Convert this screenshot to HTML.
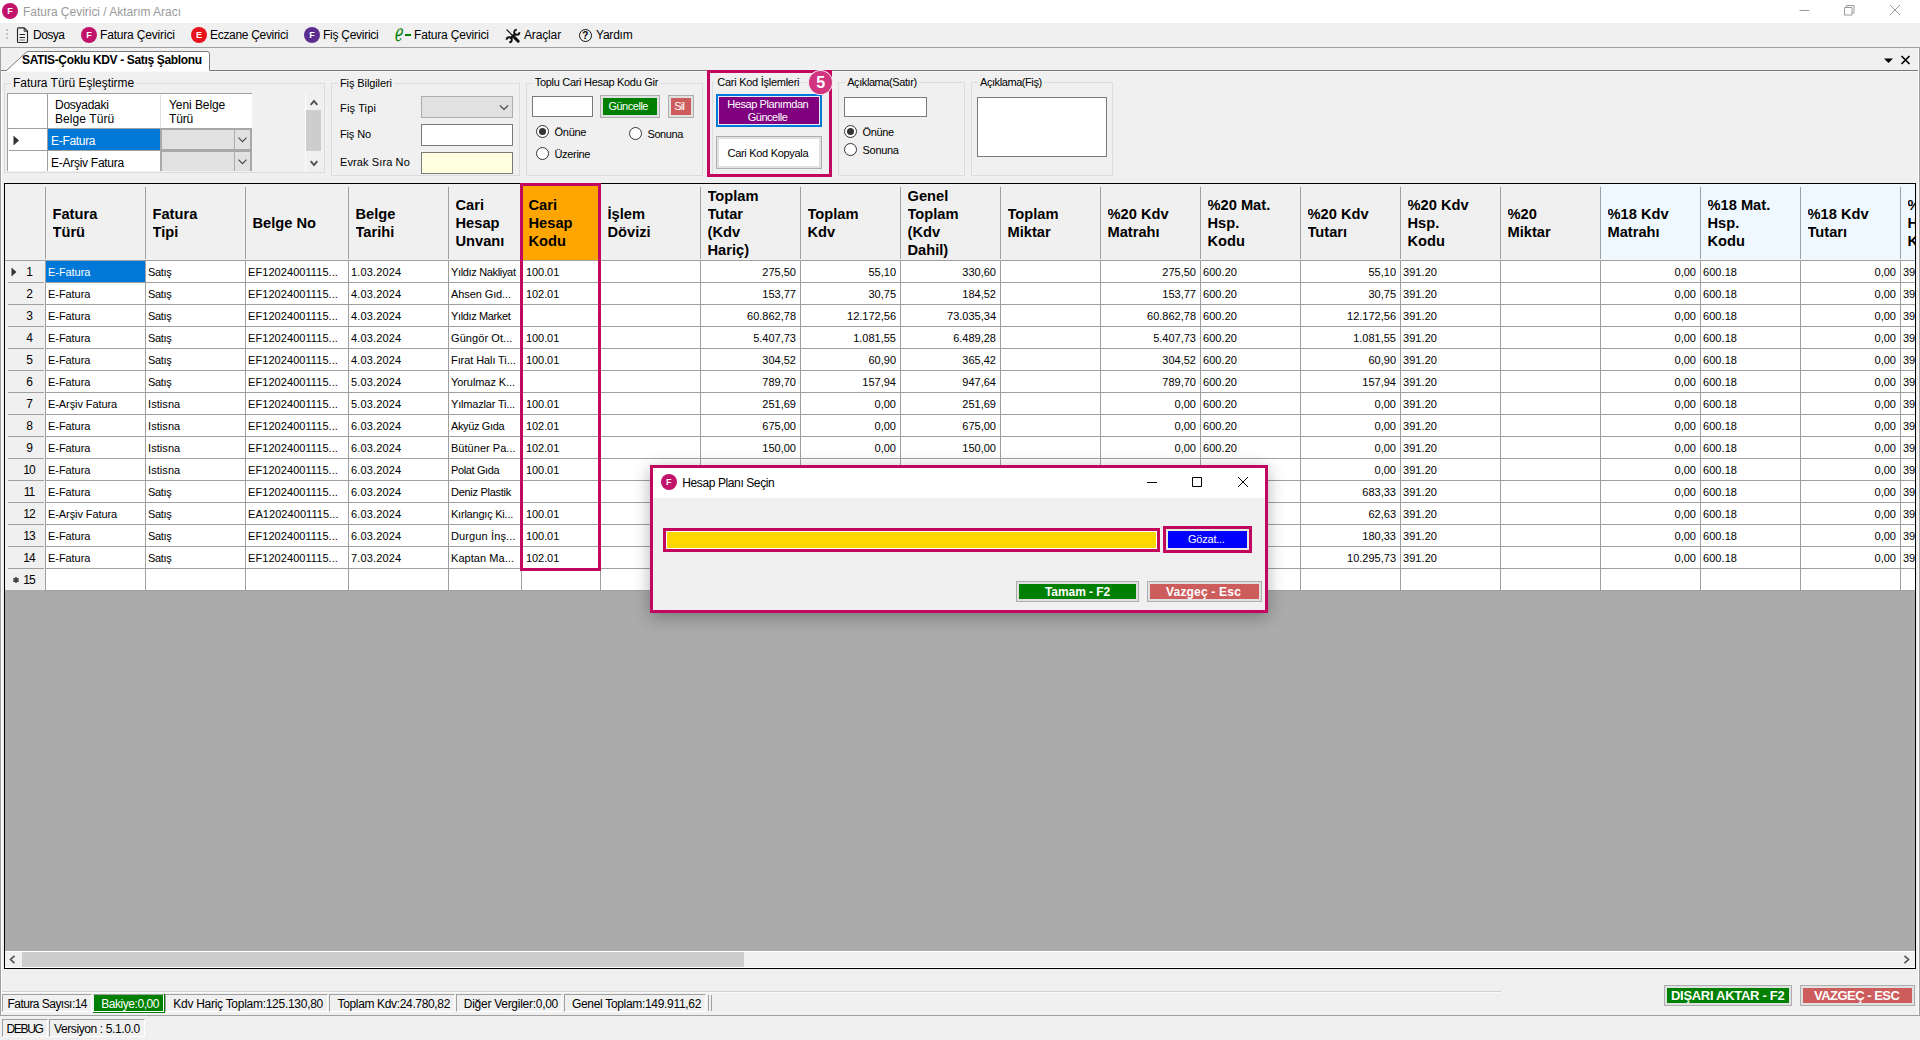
<!DOCTYPE html><html lang="tr"><head><meta charset="utf-8"><title>Fatura Çevirici / Aktarım Aracı</title><style>
html,body{margin:0;padding:0}
body{width:1920px;height:1040px;overflow:hidden;position:relative;background:#f0f0f0;font-family:"Liberation Sans",sans-serif;font-size:11px;color:#000}
div{position:absolute;box-sizing:border-box}
svg{position:absolute;overflow:visible}
.t{white-space:nowrap}
.m{white-space:nowrap;font-size:12px}
.g{white-space:nowrap;font-size:12px}
.h{font-weight:bold;font-size:14.67px;line-height:18px;white-space:nowrap}
.c{white-space:nowrap;font-size:11px;height:21px;line-height:22.5px;overflow:hidden}
.r{text-align:right}
.btn{border:1px solid #adadad;background:#e1e1e1}
.gb{border:1px solid #dcdcdc}
.rad{width:13px;height:13px;border:1px solid #333;border-radius:50%;background:#fff}
.rad.on:after{content:"";position:absolute;left:2px;top:2px;width:7px;height:7px;border-radius:50%;background:#333}
</style></head><body>
<div style="left:0px;top:0px;width:1920px;height:23px;background:#fff"></div>
<div style="left:2px;top:3px;width:16px;height:16px;border-radius:50%;background:#c2136b;color:#fff;font-weight:bold;font-size:9px;line-height:16px;text-align:center">F</div>
<div class="t" style="left:23px;top:3px;height:19px;line-height:19px;font-size:12px;letter-spacing:-0.023px;color:#9a9a9a">Fatura Çevirici / Aktarım Aracı</div>
<svg style="left:1790px;top:0" width="130" height="23" viewBox="0 0 130 23"><g stroke="#9a9a9a" stroke-width="1" fill="none"><path d="M9.5 10.5h10"/><path d="M54.5 7.5h7.5v7.5h-7.5z M56.5 7.5v-2h7.5v7.5h-2"/><path d="M100 5l10 10M110 5l-10 10"/></g></svg>
<div style="left:6px;top:29px;width:2px;height:2px;background:#c3c3c3"></div>
<div style="left:6px;top:33px;width:2px;height:2px;background:#c3c3c3"></div>
<div style="left:6px;top:37px;width:2px;height:2px;background:#c3c3c3"></div>
<svg style="left:16px;top:27px" width="13" height="17" viewBox="0 0 13 17"><path d="M2.6 0.9h5.6l3.3 3.3v10.3q0 1-1 1h-8q-1 0-1-1v-12.6q0-1 1-1z" fill="none" stroke="#222" stroke-width="1.1" stroke-linejoin="round"/><path d="M8.2 0.9v3.3h3.3" fill="none" stroke="#222" stroke-width="1"/><path d="M3.5 7.5h5.5M3.5 10.5h5.5" stroke="#222" stroke-width="1"/><path d="M3.5 13h5.5" stroke="#777" stroke-width="1"/></svg>
<div class="m" style="left:33px;top:25px;height:20px;line-height:20px;font-size:12px;letter-spacing:-0.503px;">Dosya</div>
<div style="left:81px;top:27px;width:16px;height:16px;border-radius:50%;background:#c2136b;color:#fff;font-weight:bold;font-size:9px;line-height:16px;text-align:center">F</div>
<div class="m" style="left:100px;top:25px;height:20px;line-height:20px;font-size:12px;letter-spacing:-0.177px;">Fatura Çevirici</div>
<div style="left:191px;top:27px;width:16px;height:16px;border-radius:50%;background:#e8121d;color:#fff;font-weight:bold;font-size:9px;line-height:16px;text-align:center">E</div>
<div class="m" style="left:210px;top:25px;height:20px;line-height:20px;font-size:12px;letter-spacing:-0.313px;">Eczane Çevirici</div>
<div style="left:304px;top:27px;width:16px;height:16px;border-radius:50%;background:#5b2d8e;color:#fff;font-weight:bold;font-size:9px;line-height:16px;text-align:center">F</div>
<div class="m" style="left:323px;top:25px;height:20px;line-height:20px;font-size:12px;letter-spacing:-0.264px;">Fiş Çevirici</div>
<div class="t" style="left:394.5px;top:22.5px;height:22px;line-height:22px;font-family:'DejaVu Sans',sans-serif;font-size:14px;color:#008000;transform:scale(1.0,1.72) skewX(-8deg);transform-origin:0 60%">ℯ</div>
<div style="left:405px;top:34px;width:6px;height:2px;background:#008000"></div>
<div class="m" style="left:414px;top:25px;height:20px;line-height:20px;font-size:12px;letter-spacing:-0.177px;">Fatura Çevirici</div>
<svg style="left:505.5px;top:28.5px" width="14" height="14" viewBox="0 0 14 14"><g fill="none" stroke="#111" stroke-linecap="round"><path d="M1 1L7.5 7.5" stroke-width="1.2"/><path d="M8.6 8.6L12.2 12.2" stroke-width="3"/><path d="M4.6 9.4L9.4 4.6" stroke-width="2.4" stroke-linecap="butt"/><path d="M13.4 3.2A2.6 2.6 0 1 1 10.8 0.6" stroke-width="1.9" stroke-linecap="butt"/><path d="M0.6 10.8A2.6 2.6 0 1 1 3.2 13.4" stroke-width="1.9" stroke-linecap="butt"/></g></svg>
<div class="m" style="left:524px;top:25px;height:20px;line-height:20px;font-size:12px;letter-spacing:-0.145px;">Araçlar</div>
<div style="left:578.5px;top:28.5px;width:13.5px;height:13.5px;border:1.3px solid #111;border-radius:50%;font-size:10px;line-height:11.5px;text-align:center;font-weight:bold">?</div>
<div class="m" style="left:596px;top:25px;height:20px;line-height:20px;font-size:12px;letter-spacing:-0.215px;">Yardım</div>
<div style="left:0px;top:47px;width:1920px;height:1px;background:#a0a0a0"></div>
<div style="left:0px;top:70px;width:1920px;height:1px;background:#7a7a7a"></div>
<div style="left:1px;top:71px;width:1918px;height:1px;background:#f8f8f8"></div>
<div style="left:1918px;top:48px;width:1px;height:967px;background:#fff"></div>
<div style="left:0px;top:48px;width:1px;height:968px;background:#a0a0a0"></div>
<div style="left:1px;top:71px;width:1px;height:944px;background:#fff"></div>
<div style="left:1919px;top:48px;width:1px;height:968px;background:#a0a0a0"></div>
<div style="left:0px;top:1015px;width:1920px;height:1px;background:#a0a0a0"></div>
<svg style="left:0;top:48px" width="230" height="24" viewBox="0 0 230 24"><path d="M6.5 22.5L26 4.5Q27 3.5 29 3.5H207Q209.5 3.5 209.5 6V22.5" fill="#fff" stroke="#7a7a7a" stroke-width="1"/><path d="M7 22.5H209" stroke="#fff" stroke-width="1.2"/></svg>
<div class="t" style="left:22px;top:50.8px;height:18px;line-height:18px;font-size:12px;letter-spacing:-0.350px;font-weight:bold">SATIS-Çoklu KDV - Satış Şablonu</div>
<svg style="left:1884px;top:55px" width="28" height="10" viewBox="0 0 28 10"><path d="M0 3.5h9l-4.5 4.5z" fill="#000"/><path d="M17.5 1l8 8M25.5 1l-8 8" stroke="#000" stroke-width="1.6"/></svg>
<div class="gb" style="left:4px;top:83px;width:321px;height:90px;"></div>
<div class="g" style="left:11px;top:75px;height:16px;line-height:16px;background:#f0f0f0;padding:0 2px;font-size:12px;letter-spacing:-0.028px;">Fatura Türü Eşleştirme</div>
<div style="left:7px;top:93px;width:245px;height:78px;background:#fff;border-top:1px solid #a0a0a0;border-left:1px solid #a0a0a0"></div>
<div style="left:47px;top:94px;width:1px;height:77px;background:#a0a0a0"></div>
<div style="left:160px;top:95px;width:1px;height:33px;background:#e0e0e0"></div>
<div style="left:8px;top:128px;width:244px;height:1px;background:#a0a0a0"></div>
<div style="left:9px;top:150px;width:151px;height:1px;background:#a0a0a0"></div>
<div class="g" style="left:55px;top:98px;height:14px;line-height:14px;font-size:12px;letter-spacing:-0.270px;">Dosyadaki</div>
<div class="g" style="left:55px;top:112px;height:14px;line-height:14px;font-size:12px;letter-spacing:0.081px;">Belge Türü</div>
<div class="g" style="left:169px;top:98px;height:14px;line-height:14px;font-size:12px;letter-spacing:-0.074px;">Yeni Belge</div>
<div class="g" style="left:169px;top:112px;height:14px;line-height:14px;font-size:12px;letter-spacing:-0.169px;">Türü</div>
<div style="left:48px;top:129px;width:112px;height:21px;background:#0078d7"></div>
<div class="g" style="left:51px;top:131px;height:21px;line-height:21px;font-size:12px;letter-spacing:-0.310px;color:#fff">E-Fatura</div>
<div class="g" style="left:51px;top:153px;height:21px;line-height:21px;font-size:12px;letter-spacing:-0.270px;">E-Arşiv Fatura</div>
<svg style="left:13px;top:135px" width="7" height="11" viewBox="0 0 7 11"><path d="M0.5 0.5v10l5.5-5z" fill="#333"/></svg>
<div style="left:160px;top:128px;width:92px;height:43px;background:#a8a8a8"></div>
<div style="left:162px;top:130px;width:88px;height:19px;background:#e1e1e1"></div>
<div style="left:234px;top:130px;width:1px;height:19px;background:#adadad"></div>
<svg style="left:237.5px;top:137px" width="9" height="6" viewBox="0 0 9 6"><path d="M0.5 0.6l4 4 4-4" fill="none" stroke="#444" stroke-width="1.1"/></svg>
<div style="left:162px;top:152px;width:88px;height:19px;background:#e1e1e1"></div>
<div style="left:234px;top:152px;width:1px;height:19px;background:#adadad"></div>
<svg style="left:237.5px;top:159px" width="9" height="6" viewBox="0 0 9 6"><path d="M0.5 0.6l4 4 4-4" fill="none" stroke="#444" stroke-width="1.1"/></svg>
<div style="left:5px;top:171px;width:319px;height:1px;background:#f0f0f0"></div>
<div style="left:305px;top:93px;width:17px;height:79px;background:#f0f0f0;border-left:1px solid #fbfbfb"></div>
<div style="left:306px;top:110px;width:15px;height:41px;background:#cdcdcd"></div>
<svg style="left:309.5px;top:98.5px" width="8" height="7" viewBox="0 0 8 7"><path d="M0.7 5.8l3.3-3.8 3.3 3.8" fill="none" stroke="#505050" stroke-width="1.9"/></svg>
<svg style="left:309.5px;top:159.5px" width="8" height="7" viewBox="0 0 8 7"><path d="M0.7 1.2l3.3 3.8 3.3-3.8" fill="none" stroke="#505050" stroke-width="1.9"/></svg>
<div class="gb" style="left:331px;top:83px;width:189px;height:93px;"></div>
<div class="g" style="left:338px;top:74.5px;height:16px;line-height:16px;background:#f0f0f0;padding:0 2px;font-size:11px;letter-spacing:-0.098px;">Fiş Bilgileri</div>
<div class="t" style="left:340px;top:99.5px;height:16px;line-height:16px;font-size:11px;letter-spacing:0.158px;">Fiş Tipi</div>
<div class="t" style="left:340px;top:126px;height:16px;line-height:16px;font-size:11px;letter-spacing:-0.147px;">Fiş No</div>
<div class="t" style="left:340px;top:154px;height:16px;line-height:16px;font-size:11px;letter-spacing:0.110px;">Evrak Sıra No</div>
<div style="left:421px;top:96px;width:92px;height:22px;background:#e1e1e1;border:1px solid #adadad"></div>
<svg style="left:499px;top:105px" width="10" height="6" viewBox="0 0 10 6"><path d="M1 0.5l4 4 4-4" fill="none" stroke="#444" stroke-width="1.1"/></svg>
<div style="left:421px;top:124px;width:92px;height:22px;background:#fff;border:1px solid #7a7a7a"></div>
<div style="left:421px;top:152px;width:92px;height:22px;background:#ffffe0;border:1px solid #7a7a7a"></div>
<div class="gb" style="left:526px;top:83px;width:177px;height:93px;"></div>
<div class="g" style="left:532.8px;top:74px;height:16px;line-height:16px;background:#f0f0f0;padding:0 2px;font-size:11px;letter-spacing:-0.306px;">Toplu Cari Hesap Kodu Gir</div>
<div style="left:532px;top:96px;width:61px;height:21px;background:#fff;border:1px solid #7a7a7a"></div>
<div class="btn" style="left:600px;top:95px;width:60px;height:23px;"></div>
<div style="left:603px;top:98px;width:54px;height:17px;background:#008000"></div>
<div class="t" style="left:608.4px;top:98.3px;height:17px;line-height:17px;font-size:11px;letter-spacing:-0.477px;color:#fff">Güncelle</div>
<div class="btn" style="left:668px;top:95px;width:26px;height:23px;"></div>
<div style="left:671px;top:98px;width:20px;height:17px;background:#cd5c5c"></div>
<div class="t" style="left:674.2px;top:98.3px;height:17px;line-height:17px;font-size:11px;letter-spacing:-0.775px;color:#fff">Sil</div>
<div class="rad on" style="left:536.0px;top:125.0px"></div>
<div class="t" style="left:554.5px;top:124.0px;height:16px;line-height:16px;font-size:11px;letter-spacing:-0.266px;">Önüne</div>
<div class="rad" style="left:629.0px;top:127.0px"></div>
<div class="t" style="left:647.5px;top:126.0px;height:16px;line-height:16px;font-size:11px;letter-spacing:-0.421px;">Sonuna</div>
<div class="rad" style="left:536.0px;top:147.0px"></div>
<div class="t" style="left:554.5px;top:146.0px;height:16px;line-height:16px;font-size:11px;letter-spacing:-0.329px;">Üzerine</div>
<div class="gb" style="left:712px;top:82px;width:119px;height:94px;"></div>
<div class="g" style="left:715.3px;top:74px;height:16px;line-height:16px;background:#f0f0f0;padding:0 2px;font-size:11px;letter-spacing:-0.267px;">Cari Kod İşlemleri</div>
<div style="left:716px;top:94px;width:106px;height:33px;border:2px solid #0078d7;background:#e5f1fb"></div>
<div style="left:719px;top:97px;width:100px;height:27px;background:#800080"></div>
<div class="t" style="left:727.2px;top:98px;height:13px;line-height:13px;font-size:11px;letter-spacing:-0.423px;color:#fff">Hesap Planımdan</div>
<div class="t" style="left:747.7px;top:111px;height:13px;line-height:13px;font-size:11px;letter-spacing:-0.477px;color:#fff">Güncelle</div>
<div class="btn" style="left:716px;top:136px;width:106px;height:33px;"></div>
<div style="left:719px;top:139px;width:100px;height:27px;background:#fff"></div>
<div class="t" style="left:727.5px;top:145px;height:16px;line-height:16px;font-size:11px;letter-spacing:-0.300px;">Cari Kod Kopyala</div>
<div style="left:707px;top:70px;width:125px;height:107px;border:3px solid #c2075f"></div>
<div style="left:808.2px;top:69.8px;width:24.6px;height:24.8px;border-radius:50%;background:#d2357f;border:1px solid #fbe9f1;color:#fff;font-weight:bold;font-size:16px;line-height:23px;text-align:center;padding-left:0.5px">5</div>
<div class="gb" style="left:838px;top:82px;width:127px;height:94px;"></div>
<div class="g" style="left:845.2px;top:74px;height:16px;line-height:16px;background:#f0f0f0;padding:0 2px;font-size:11px;letter-spacing:-0.420px;">Açıklama(Satır)</div>
<div style="left:844px;top:97px;width:83px;height:20px;background:#fff;border:1px solid #7a7a7a"></div>
<div class="rad on" style="left:844.0px;top:125.0px"></div>
<div class="t" style="left:862.5px;top:124.0px;height:16px;line-height:16px;font-size:11px;letter-spacing:-0.346px;">Önüne</div>
<div class="rad" style="left:844.0px;top:143.0px"></div>
<div class="t" style="left:862.5px;top:142.0px;height:16px;line-height:16px;font-size:11px;letter-spacing:-0.288px;">Sonuna</div>
<div class="gb" style="left:971px;top:82px;width:142px;height:94px;"></div>
<div class="g" style="left:978px;top:74px;height:16px;line-height:16px;background:#f0f0f0;padding:0 2px;font-size:11px;letter-spacing:-0.425px;">Açıklama(Fiş)</div>
<div style="left:977px;top:97px;width:130px;height:60px;background:#fff;border:1px solid #7a7a7a"></div>
<div style="left:4px;top:183px;width:1912px;height:786px;border:1px solid #000;background:#ababab"></div>
<div style="left:5px;top:184px;width:1910px;height:76px;background:#f0f0f0"></div>
<div style="left:1601px;top:184px;width:314px;height:76px;background:#f0f8ff"></div>
<div style="left:46px;top:261px;width:1869px;height:329px;background:#fff"></div>
<div style="left:5px;top:261px;width:40px;height:329px;background:#f0f0f0"></div>
<div style="left:522px;top:184px;width:78px;height:76px;background:#ffa500"></div>
<div style="left:45px;top:187px;width:1px;height:72px;background:#a0a0a0"></div>
<div style="left:45px;top:260px;width:1px;height:331px;background:#a0a0a0"></div>
<div style="left:145px;top:187px;width:1px;height:72px;background:#a0a0a0"></div>
<div style="left:145px;top:260px;width:1px;height:331px;background:#a0a0a0"></div>
<div style="left:245px;top:187px;width:1px;height:72px;background:#a0a0a0"></div>
<div style="left:245px;top:260px;width:1px;height:331px;background:#a0a0a0"></div>
<div style="left:348px;top:187px;width:1px;height:72px;background:#a0a0a0"></div>
<div style="left:348px;top:260px;width:1px;height:331px;background:#a0a0a0"></div>
<div style="left:448px;top:187px;width:1px;height:72px;background:#a0a0a0"></div>
<div style="left:448px;top:260px;width:1px;height:331px;background:#a0a0a0"></div>
<div style="left:521px;top:187px;width:1px;height:72px;background:#a0a0a0"></div>
<div style="left:521px;top:260px;width:1px;height:331px;background:#a0a0a0"></div>
<div style="left:600px;top:187px;width:1px;height:72px;background:#a0a0a0"></div>
<div style="left:600px;top:260px;width:1px;height:331px;background:#a0a0a0"></div>
<div style="left:700px;top:187px;width:1px;height:72px;background:#a0a0a0"></div>
<div style="left:700px;top:260px;width:1px;height:331px;background:#a0a0a0"></div>
<div style="left:800px;top:187px;width:1px;height:72px;background:#a0a0a0"></div>
<div style="left:800px;top:260px;width:1px;height:331px;background:#a0a0a0"></div>
<div style="left:900px;top:187px;width:1px;height:72px;background:#a0a0a0"></div>
<div style="left:900px;top:260px;width:1px;height:331px;background:#a0a0a0"></div>
<div style="left:1000px;top:187px;width:1px;height:72px;background:#a0a0a0"></div>
<div style="left:1000px;top:260px;width:1px;height:331px;background:#a0a0a0"></div>
<div style="left:1100px;top:187px;width:1px;height:72px;background:#a0a0a0"></div>
<div style="left:1100px;top:260px;width:1px;height:331px;background:#a0a0a0"></div>
<div style="left:1200px;top:187px;width:1px;height:72px;background:#a0a0a0"></div>
<div style="left:1200px;top:260px;width:1px;height:331px;background:#a0a0a0"></div>
<div style="left:1300px;top:187px;width:1px;height:72px;background:#a0a0a0"></div>
<div style="left:1300px;top:260px;width:1px;height:331px;background:#a0a0a0"></div>
<div style="left:1400px;top:187px;width:1px;height:72px;background:#a0a0a0"></div>
<div style="left:1400px;top:260px;width:1px;height:331px;background:#a0a0a0"></div>
<div style="left:1500px;top:187px;width:1px;height:72px;background:#a0a0a0"></div>
<div style="left:1500px;top:260px;width:1px;height:331px;background:#a0a0a0"></div>
<div style="left:1600px;top:187px;width:1px;height:72px;background:#a0a0a0"></div>
<div style="left:1600px;top:260px;width:1px;height:331px;background:#a0a0a0"></div>
<div style="left:1700px;top:187px;width:1px;height:72px;background:#a0a0a0"></div>
<div style="left:1700px;top:260px;width:1px;height:331px;background:#a0a0a0"></div>
<div style="left:1800px;top:187px;width:1px;height:72px;background:#a0a0a0"></div>
<div style="left:1800px;top:260px;width:1px;height:331px;background:#a0a0a0"></div>
<div style="left:1900px;top:187px;width:1px;height:72px;background:#a0a0a0"></div>
<div style="left:1900px;top:260px;width:1px;height:331px;background:#a0a0a0"></div>
<div style="left:5px;top:260px;width:1910px;height:1px;background:#a0a0a0"></div>
<div style="left:46px;top:282px;width:1869px;height:1px;background:#a0a0a0"></div>
<div style="left:8px;top:282px;width:36px;height:1px;background:#a0a0a0"></div>
<div style="left:46px;top:304px;width:1869px;height:1px;background:#a0a0a0"></div>
<div style="left:8px;top:304px;width:36px;height:1px;background:#a0a0a0"></div>
<div style="left:46px;top:326px;width:1869px;height:1px;background:#a0a0a0"></div>
<div style="left:8px;top:326px;width:36px;height:1px;background:#a0a0a0"></div>
<div style="left:46px;top:348px;width:1869px;height:1px;background:#a0a0a0"></div>
<div style="left:8px;top:348px;width:36px;height:1px;background:#a0a0a0"></div>
<div style="left:46px;top:370px;width:1869px;height:1px;background:#a0a0a0"></div>
<div style="left:8px;top:370px;width:36px;height:1px;background:#a0a0a0"></div>
<div style="left:46px;top:392px;width:1869px;height:1px;background:#a0a0a0"></div>
<div style="left:8px;top:392px;width:36px;height:1px;background:#a0a0a0"></div>
<div style="left:46px;top:414px;width:1869px;height:1px;background:#a0a0a0"></div>
<div style="left:8px;top:414px;width:36px;height:1px;background:#a0a0a0"></div>
<div style="left:46px;top:436px;width:1869px;height:1px;background:#a0a0a0"></div>
<div style="left:8px;top:436px;width:36px;height:1px;background:#a0a0a0"></div>
<div style="left:46px;top:458px;width:1869px;height:1px;background:#a0a0a0"></div>
<div style="left:8px;top:458px;width:36px;height:1px;background:#a0a0a0"></div>
<div style="left:46px;top:480px;width:1869px;height:1px;background:#a0a0a0"></div>
<div style="left:8px;top:480px;width:36px;height:1px;background:#a0a0a0"></div>
<div style="left:46px;top:502px;width:1869px;height:1px;background:#a0a0a0"></div>
<div style="left:8px;top:502px;width:36px;height:1px;background:#a0a0a0"></div>
<div style="left:46px;top:524px;width:1869px;height:1px;background:#a0a0a0"></div>
<div style="left:8px;top:524px;width:36px;height:1px;background:#a0a0a0"></div>
<div style="left:46px;top:546px;width:1869px;height:1px;background:#a0a0a0"></div>
<div style="left:8px;top:546px;width:36px;height:1px;background:#a0a0a0"></div>
<div style="left:46px;top:568px;width:1869px;height:1px;background:#a0a0a0"></div>
<div style="left:8px;top:568px;width:36px;height:1px;background:#a0a0a0"></div>
<div style="left:46px;top:590px;width:1869px;height:1px;background:#a0a0a0"></div>
<div class="h" style="left:52.5px;top:204.7px;width:200px;overflow:hidden;height:36px">Fatura<br>Türü</div>
<div class="h" style="left:152.5px;top:204.7px;width:200px;overflow:hidden;height:36px">Fatura<br>Tipi</div>
<div class="h" style="left:252.5px;top:213.7px;width:200px;overflow:hidden;height:18px">Belge No</div>
<div class="h" style="left:355.5px;top:204.7px;width:200px;overflow:hidden;height:36px">Belge<br>Tarihi</div>
<div class="h" style="left:455.5px;top:195.7px;width:200px;overflow:hidden;height:54px">Cari<br>Hesap<br>Unvanı</div>
<div class="h" style="left:528.5px;top:195.7px;width:200px;overflow:hidden;height:54px">Cari<br>Hesap<br>Kodu</div>
<div class="h" style="left:607.5px;top:204.7px;width:200px;overflow:hidden;height:36px">İşlem<br>Dövizi</div>
<div class="h" style="left:707.5px;top:186.7px;width:200px;overflow:hidden;height:72px">Toplam<br>Tutar<br>(Kdv<br>Hariç)</div>
<div class="h" style="left:807.5px;top:204.7px;width:200px;overflow:hidden;height:36px">Toplam<br>Kdv</div>
<div class="h" style="left:907.5px;top:186.7px;width:200px;overflow:hidden;height:72px">Genel<br>Toplam<br>(Kdv<br>Dahil)</div>
<div class="h" style="left:1007.5px;top:204.7px;width:200px;overflow:hidden;height:36px">Toplam<br>Miktar</div>
<div class="h" style="left:1107.5px;top:204.7px;width:200px;overflow:hidden;height:36px">%20 Kdv<br>Matrahı</div>
<div class="h" style="left:1207.5px;top:195.7px;width:200px;overflow:hidden;height:54px">%20 Mat.<br>Hsp.<br>Kodu</div>
<div class="h" style="left:1307.5px;top:204.7px;width:200px;overflow:hidden;height:36px">%20 Kdv<br>Tutarı</div>
<div class="h" style="left:1407.5px;top:195.7px;width:200px;overflow:hidden;height:54px">%20 Kdv<br>Hsp.<br>Kodu</div>
<div class="h" style="left:1507.5px;top:204.7px;width:200px;overflow:hidden;height:36px">%20<br>Miktar</div>
<div class="h" style="left:1607.5px;top:204.7px;width:200px;overflow:hidden;height:36px">%18 Kdv<br>Matrahı</div>
<div class="h" style="left:1707.5px;top:195.7px;width:200px;overflow:hidden;height:54px">%18 Mat.<br>Hsp.<br>Kodu</div>
<div class="h" style="left:1807.5px;top:204.7px;width:200px;overflow:hidden;height:36px">%18 Kdv<br>Tutarı</div>
<div class="h" style="left:1907.5px;top:195.7px;width:8px;overflow:hidden;height:54px">%<br>H<br>K</div>
<div style="left:46px;top:261px;width:99px;height:21px;background:#0078d7"></div>
<div class="c" style="left:14px;top:261px;width:29px;text-align:center;font-size:12px;letter-spacing:-1px;padding-left:1px">1</div>
<div class="c" style="left:46px;top:261px;width:99px;padding-left:2px;letter-spacing:-0.062px;color:#fff">E-Fatura</div>
<div class="c" style="left:146px;top:261px;width:99px;padding-left:2px;letter-spacing:-0.353px;">Satış</div>
<div class="c" style="left:246px;top:261px;width:102px;padding-left:2px;letter-spacing:0.069px;">EF12024001115...</div>
<div class="c" style="left:349px;top:261px;width:99px;padding-left:2px;letter-spacing:0.151px;">1.03.2024</div>
<div class="c" style="left:449px;top:261px;width:72px;padding-left:2px;letter-spacing:-0.339px;">Yıldız Nakliyat</div>
<div class="c" style="left:522px;top:261px;width:78px;padding-left:4px;letter-spacing:-0.074px;">100.01</div>
<div class="c r" style="left:701px;top:261px;width:99px;padding-right:4px;">275,50</div>
<div class="c r" style="left:801px;top:261px;width:99px;padding-right:4px;">55,10</div>
<div class="c r" style="left:901px;top:261px;width:99px;padding-right:4px;">330,60</div>
<div class="c r" style="left:1101px;top:261px;width:99px;padding-right:4px;">275,50</div>
<div class="c" style="left:1201px;top:261px;width:99px;padding-left:2px;letter-spacing:0.059px;">600.20</div>
<div class="c r" style="left:1301px;top:261px;width:99px;padding-right:4px;">55,10</div>
<div class="c" style="left:1401px;top:261px;width:99px;padding-left:2px;letter-spacing:0.059px;">391.20</div>
<div class="c r" style="left:1601px;top:261px;width:99px;padding-right:4px;">0,00</div>
<div class="c" style="left:1701px;top:261px;width:99px;padding-left:2px;letter-spacing:0.059px;">600.18</div>
<div class="c r" style="left:1801px;top:261px;width:99px;padding-right:4px;">0,00</div>
<div class="c" style="left:1901px;top:261px;width:14px;padding-left:2px">39</div>
<div class="c" style="left:14px;top:283px;width:29px;text-align:center;font-size:12px;letter-spacing:-1px;padding-left:1px">2</div>
<div class="c" style="left:46px;top:283px;width:99px;padding-left:2px;letter-spacing:-0.062px;">E-Fatura</div>
<div class="c" style="left:146px;top:283px;width:99px;padding-left:2px;letter-spacing:-0.353px;">Satış</div>
<div class="c" style="left:246px;top:283px;width:102px;padding-left:2px;letter-spacing:0.069px;">EF12024001115...</div>
<div class="c" style="left:349px;top:283px;width:99px;padding-left:2px;letter-spacing:0.151px;">4.03.2024</div>
<div class="c" style="left:449px;top:283px;width:72px;padding-left:2px;letter-spacing:-0.095px;">Ahsen Gıd...</div>
<div class="c" style="left:522px;top:283px;width:78px;padding-left:4px;letter-spacing:-0.074px;">102.01</div>
<div class="c r" style="left:701px;top:283px;width:99px;padding-right:4px;">153,77</div>
<div class="c r" style="left:801px;top:283px;width:99px;padding-right:4px;">30,75</div>
<div class="c r" style="left:901px;top:283px;width:99px;padding-right:4px;">184,52</div>
<div class="c r" style="left:1101px;top:283px;width:99px;padding-right:4px;">153,77</div>
<div class="c" style="left:1201px;top:283px;width:99px;padding-left:2px;letter-spacing:0.059px;">600.20</div>
<div class="c r" style="left:1301px;top:283px;width:99px;padding-right:4px;">30,75</div>
<div class="c" style="left:1401px;top:283px;width:99px;padding-left:2px;letter-spacing:0.059px;">391.20</div>
<div class="c r" style="left:1601px;top:283px;width:99px;padding-right:4px;">0,00</div>
<div class="c" style="left:1701px;top:283px;width:99px;padding-left:2px;letter-spacing:0.059px;">600.18</div>
<div class="c r" style="left:1801px;top:283px;width:99px;padding-right:4px;">0,00</div>
<div class="c" style="left:1901px;top:283px;width:14px;padding-left:2px">39</div>
<div class="c" style="left:14px;top:305px;width:29px;text-align:center;font-size:12px;letter-spacing:-1px;padding-left:1px">3</div>
<div class="c" style="left:46px;top:305px;width:99px;padding-left:2px;letter-spacing:-0.062px;">E-Fatura</div>
<div class="c" style="left:146px;top:305px;width:99px;padding-left:2px;letter-spacing:-0.353px;">Satış</div>
<div class="c" style="left:246px;top:305px;width:102px;padding-left:2px;letter-spacing:0.069px;">EF12024001115...</div>
<div class="c" style="left:349px;top:305px;width:99px;padding-left:2px;letter-spacing:0.151px;">4.03.2024</div>
<div class="c" style="left:449px;top:305px;width:72px;padding-left:2px;letter-spacing:-0.368px;">Yıldız Market</div>
<div class="c r" style="left:701px;top:305px;width:99px;padding-right:4px;">60.862,78</div>
<div class="c r" style="left:801px;top:305px;width:99px;padding-right:4px;">12.172,56</div>
<div class="c r" style="left:901px;top:305px;width:99px;padding-right:4px;">73.035,34</div>
<div class="c r" style="left:1101px;top:305px;width:99px;padding-right:4px;">60.862,78</div>
<div class="c" style="left:1201px;top:305px;width:99px;padding-left:2px;letter-spacing:0.059px;">600.20</div>
<div class="c r" style="left:1301px;top:305px;width:99px;padding-right:4px;">12.172,56</div>
<div class="c" style="left:1401px;top:305px;width:99px;padding-left:2px;letter-spacing:0.059px;">391.20</div>
<div class="c r" style="left:1601px;top:305px;width:99px;padding-right:4px;">0,00</div>
<div class="c" style="left:1701px;top:305px;width:99px;padding-left:2px;letter-spacing:0.059px;">600.18</div>
<div class="c r" style="left:1801px;top:305px;width:99px;padding-right:4px;">0,00</div>
<div class="c" style="left:1901px;top:305px;width:14px;padding-left:2px">39</div>
<div class="c" style="left:14px;top:327px;width:29px;text-align:center;font-size:12px;letter-spacing:-1px;padding-left:1px">4</div>
<div class="c" style="left:46px;top:327px;width:99px;padding-left:2px;letter-spacing:-0.062px;">E-Fatura</div>
<div class="c" style="left:146px;top:327px;width:99px;padding-left:2px;letter-spacing:-0.353px;">Satış</div>
<div class="c" style="left:246px;top:327px;width:102px;padding-left:2px;letter-spacing:0.069px;">EF12024001115...</div>
<div class="c" style="left:349px;top:327px;width:99px;padding-left:2px;letter-spacing:0.151px;">4.03.2024</div>
<div class="c" style="left:449px;top:327px;width:72px;padding-left:2px;letter-spacing:0.081px;">Güngör Ot...</div>
<div class="c" style="left:522px;top:327px;width:78px;padding-left:4px;letter-spacing:-0.074px;">100.01</div>
<div class="c r" style="left:701px;top:327px;width:99px;padding-right:4px;">5.407,73</div>
<div class="c r" style="left:801px;top:327px;width:99px;padding-right:4px;">1.081,55</div>
<div class="c r" style="left:901px;top:327px;width:99px;padding-right:4px;">6.489,28</div>
<div class="c r" style="left:1101px;top:327px;width:99px;padding-right:4px;">5.407,73</div>
<div class="c" style="left:1201px;top:327px;width:99px;padding-left:2px;letter-spacing:0.059px;">600.20</div>
<div class="c r" style="left:1301px;top:327px;width:99px;padding-right:4px;">1.081,55</div>
<div class="c" style="left:1401px;top:327px;width:99px;padding-left:2px;letter-spacing:0.059px;">391.20</div>
<div class="c r" style="left:1601px;top:327px;width:99px;padding-right:4px;">0,00</div>
<div class="c" style="left:1701px;top:327px;width:99px;padding-left:2px;letter-spacing:0.059px;">600.18</div>
<div class="c r" style="left:1801px;top:327px;width:99px;padding-right:4px;">0,00</div>
<div class="c" style="left:1901px;top:327px;width:14px;padding-left:2px">39</div>
<div class="c" style="left:14px;top:349px;width:29px;text-align:center;font-size:12px;letter-spacing:-1px;padding-left:1px">5</div>
<div class="c" style="left:46px;top:349px;width:99px;padding-left:2px;letter-spacing:-0.062px;">E-Fatura</div>
<div class="c" style="left:146px;top:349px;width:99px;padding-left:2px;letter-spacing:-0.353px;">Satış</div>
<div class="c" style="left:246px;top:349px;width:102px;padding-left:2px;letter-spacing:0.069px;">EF12024001115...</div>
<div class="c" style="left:349px;top:349px;width:99px;padding-left:2px;letter-spacing:0.151px;">4.03.2024</div>
<div class="c" style="left:449px;top:349px;width:72px;padding-left:2px;letter-spacing:-0.088px;">Fırat Halı Ti...</div>
<div class="c" style="left:522px;top:349px;width:78px;padding-left:4px;letter-spacing:-0.074px;">100.01</div>
<div class="c r" style="left:701px;top:349px;width:99px;padding-right:4px;">304,52</div>
<div class="c r" style="left:801px;top:349px;width:99px;padding-right:4px;">60,90</div>
<div class="c r" style="left:901px;top:349px;width:99px;padding-right:4px;">365,42</div>
<div class="c r" style="left:1101px;top:349px;width:99px;padding-right:4px;">304,52</div>
<div class="c" style="left:1201px;top:349px;width:99px;padding-left:2px;letter-spacing:0.059px;">600.20</div>
<div class="c r" style="left:1301px;top:349px;width:99px;padding-right:4px;">60,90</div>
<div class="c" style="left:1401px;top:349px;width:99px;padding-left:2px;letter-spacing:0.059px;">391.20</div>
<div class="c r" style="left:1601px;top:349px;width:99px;padding-right:4px;">0,00</div>
<div class="c" style="left:1701px;top:349px;width:99px;padding-left:2px;letter-spacing:0.059px;">600.18</div>
<div class="c r" style="left:1801px;top:349px;width:99px;padding-right:4px;">0,00</div>
<div class="c" style="left:1901px;top:349px;width:14px;padding-left:2px">39</div>
<div class="c" style="left:14px;top:371px;width:29px;text-align:center;font-size:12px;letter-spacing:-1px;padding-left:1px">6</div>
<div class="c" style="left:46px;top:371px;width:99px;padding-left:2px;letter-spacing:-0.062px;">E-Fatura</div>
<div class="c" style="left:146px;top:371px;width:99px;padding-left:2px;letter-spacing:-0.353px;">Satış</div>
<div class="c" style="left:246px;top:371px;width:102px;padding-left:2px;letter-spacing:0.069px;">EF12024001115...</div>
<div class="c" style="left:349px;top:371px;width:99px;padding-left:2px;letter-spacing:0.151px;">5.03.2024</div>
<div class="c" style="left:449px;top:371px;width:72px;padding-left:2px;letter-spacing:-0.078px;">Yorulmaz K...</div>
<div class="c r" style="left:701px;top:371px;width:99px;padding-right:4px;">789,70</div>
<div class="c r" style="left:801px;top:371px;width:99px;padding-right:4px;">157,94</div>
<div class="c r" style="left:901px;top:371px;width:99px;padding-right:4px;">947,64</div>
<div class="c r" style="left:1101px;top:371px;width:99px;padding-right:4px;">789,70</div>
<div class="c" style="left:1201px;top:371px;width:99px;padding-left:2px;letter-spacing:0.059px;">600.20</div>
<div class="c r" style="left:1301px;top:371px;width:99px;padding-right:4px;">157,94</div>
<div class="c" style="left:1401px;top:371px;width:99px;padding-left:2px;letter-spacing:0.059px;">391.20</div>
<div class="c r" style="left:1601px;top:371px;width:99px;padding-right:4px;">0,00</div>
<div class="c" style="left:1701px;top:371px;width:99px;padding-left:2px;letter-spacing:0.059px;">600.18</div>
<div class="c r" style="left:1801px;top:371px;width:99px;padding-right:4px;">0,00</div>
<div class="c" style="left:1901px;top:371px;width:14px;padding-left:2px">39</div>
<div class="c" style="left:14px;top:393px;width:29px;text-align:center;font-size:12px;letter-spacing:-1px;padding-left:1px">7</div>
<div class="c" style="left:46px;top:393px;width:99px;padding-left:2px;letter-spacing:-0.092px;">E-Arşiv Fatura</div>
<div class="c" style="left:146px;top:393px;width:99px;padding-left:2px;letter-spacing:0.073px;">Istisna</div>
<div class="c" style="left:246px;top:393px;width:102px;padding-left:2px;letter-spacing:0.069px;">EF12024001115...</div>
<div class="c" style="left:349px;top:393px;width:99px;padding-left:2px;letter-spacing:0.151px;">5.03.2024</div>
<div class="c" style="left:449px;top:393px;width:72px;padding-left:2px;letter-spacing:-0.175px;">Yılmazlar Ti...</div>
<div class="c" style="left:522px;top:393px;width:78px;padding-left:4px;letter-spacing:-0.074px;">100.01</div>
<div class="c r" style="left:701px;top:393px;width:99px;padding-right:4px;">251,69</div>
<div class="c r" style="left:801px;top:393px;width:99px;padding-right:4px;">0,00</div>
<div class="c r" style="left:901px;top:393px;width:99px;padding-right:4px;">251,69</div>
<div class="c r" style="left:1101px;top:393px;width:99px;padding-right:4px;">0,00</div>
<div class="c" style="left:1201px;top:393px;width:99px;padding-left:2px;letter-spacing:0.059px;">600.20</div>
<div class="c r" style="left:1301px;top:393px;width:99px;padding-right:4px;">0,00</div>
<div class="c" style="left:1401px;top:393px;width:99px;padding-left:2px;letter-spacing:0.059px;">391.20</div>
<div class="c r" style="left:1601px;top:393px;width:99px;padding-right:4px;">0,00</div>
<div class="c" style="left:1701px;top:393px;width:99px;padding-left:2px;letter-spacing:0.059px;">600.18</div>
<div class="c r" style="left:1801px;top:393px;width:99px;padding-right:4px;">0,00</div>
<div class="c" style="left:1901px;top:393px;width:14px;padding-left:2px">39</div>
<div class="c" style="left:14px;top:415px;width:29px;text-align:center;font-size:12px;letter-spacing:-1px;padding-left:1px">8</div>
<div class="c" style="left:46px;top:415px;width:99px;padding-left:2px;letter-spacing:-0.062px;">E-Fatura</div>
<div class="c" style="left:146px;top:415px;width:99px;padding-left:2px;letter-spacing:0.073px;">Istisna</div>
<div class="c" style="left:246px;top:415px;width:102px;padding-left:2px;letter-spacing:0.069px;">EF12024001115...</div>
<div class="c" style="left:349px;top:415px;width:99px;padding-left:2px;letter-spacing:0.151px;">6.03.2024</div>
<div class="c" style="left:449px;top:415px;width:72px;padding-left:2px;letter-spacing:-0.366px;">Akyüz Gıda</div>
<div class="c" style="left:522px;top:415px;width:78px;padding-left:4px;letter-spacing:-0.074px;">102.01</div>
<div class="c r" style="left:701px;top:415px;width:99px;padding-right:4px;">675,00</div>
<div class="c r" style="left:801px;top:415px;width:99px;padding-right:4px;">0,00</div>
<div class="c r" style="left:901px;top:415px;width:99px;padding-right:4px;">675,00</div>
<div class="c r" style="left:1101px;top:415px;width:99px;padding-right:4px;">0,00</div>
<div class="c" style="left:1201px;top:415px;width:99px;padding-left:2px;letter-spacing:0.059px;">600.20</div>
<div class="c r" style="left:1301px;top:415px;width:99px;padding-right:4px;">0,00</div>
<div class="c" style="left:1401px;top:415px;width:99px;padding-left:2px;letter-spacing:0.059px;">391.20</div>
<div class="c r" style="left:1601px;top:415px;width:99px;padding-right:4px;">0,00</div>
<div class="c" style="left:1701px;top:415px;width:99px;padding-left:2px;letter-spacing:0.059px;">600.18</div>
<div class="c r" style="left:1801px;top:415px;width:99px;padding-right:4px;">0,00</div>
<div class="c" style="left:1901px;top:415px;width:14px;padding-left:2px">39</div>
<div class="c" style="left:14px;top:437px;width:29px;text-align:center;font-size:12px;letter-spacing:-1px;padding-left:1px">9</div>
<div class="c" style="left:46px;top:437px;width:99px;padding-left:2px;letter-spacing:-0.062px;">E-Fatura</div>
<div class="c" style="left:146px;top:437px;width:99px;padding-left:2px;letter-spacing:0.073px;">Istisna</div>
<div class="c" style="left:246px;top:437px;width:102px;padding-left:2px;letter-spacing:0.069px;">EF12024001115...</div>
<div class="c" style="left:349px;top:437px;width:99px;padding-left:2px;letter-spacing:0.151px;">6.03.2024</div>
<div class="c" style="left:449px;top:437px;width:72px;padding-left:2px;letter-spacing:0.030px;">Bütüner Pa...</div>
<div class="c" style="left:522px;top:437px;width:78px;padding-left:4px;letter-spacing:-0.074px;">102.01</div>
<div class="c r" style="left:701px;top:437px;width:99px;padding-right:4px;">150,00</div>
<div class="c r" style="left:801px;top:437px;width:99px;padding-right:4px;">0,00</div>
<div class="c r" style="left:901px;top:437px;width:99px;padding-right:4px;">150,00</div>
<div class="c r" style="left:1101px;top:437px;width:99px;padding-right:4px;">0,00</div>
<div class="c" style="left:1201px;top:437px;width:99px;padding-left:2px;letter-spacing:0.059px;">600.20</div>
<div class="c r" style="left:1301px;top:437px;width:99px;padding-right:4px;">0,00</div>
<div class="c" style="left:1401px;top:437px;width:99px;padding-left:2px;letter-spacing:0.059px;">391.20</div>
<div class="c r" style="left:1601px;top:437px;width:99px;padding-right:4px;">0,00</div>
<div class="c" style="left:1701px;top:437px;width:99px;padding-left:2px;letter-spacing:0.059px;">600.18</div>
<div class="c r" style="left:1801px;top:437px;width:99px;padding-right:4px;">0,00</div>
<div class="c" style="left:1901px;top:437px;width:14px;padding-left:2px">39</div>
<div class="c" style="left:14px;top:459px;width:29px;text-align:center;font-size:12px;letter-spacing:-1px;padding-left:1px">10</div>
<div class="c" style="left:46px;top:459px;width:99px;padding-left:2px;letter-spacing:-0.062px;">E-Fatura</div>
<div class="c" style="left:146px;top:459px;width:99px;padding-left:2px;letter-spacing:0.073px;">Istisna</div>
<div class="c" style="left:246px;top:459px;width:102px;padding-left:2px;letter-spacing:0.069px;">EF12024001115...</div>
<div class="c" style="left:349px;top:459px;width:99px;padding-left:2px;letter-spacing:0.151px;">6.03.2024</div>
<div class="c" style="left:449px;top:459px;width:72px;padding-left:2px;letter-spacing:-0.368px;">Polat Gıda</div>
<div class="c" style="left:522px;top:459px;width:78px;padding-left:4px;letter-spacing:-0.074px;">100.01</div>
<div class="c r" style="left:1301px;top:459px;width:99px;padding-right:4px;">0,00</div>
<div class="c" style="left:1401px;top:459px;width:99px;padding-left:2px;letter-spacing:0.059px;">391.20</div>
<div class="c r" style="left:1601px;top:459px;width:99px;padding-right:4px;">0,00</div>
<div class="c" style="left:1701px;top:459px;width:99px;padding-left:2px;letter-spacing:0.059px;">600.18</div>
<div class="c r" style="left:1801px;top:459px;width:99px;padding-right:4px;">0,00</div>
<div class="c" style="left:1901px;top:459px;width:14px;padding-left:2px">39</div>
<div class="c" style="left:14px;top:481px;width:29px;text-align:center;font-size:12px;letter-spacing:-1px;padding-left:1px">11</div>
<div class="c" style="left:46px;top:481px;width:99px;padding-left:2px;letter-spacing:-0.062px;">E-Fatura</div>
<div class="c" style="left:146px;top:481px;width:99px;padding-left:2px;letter-spacing:-0.353px;">Satış</div>
<div class="c" style="left:246px;top:481px;width:102px;padding-left:2px;letter-spacing:0.069px;">EF12024001115...</div>
<div class="c" style="left:349px;top:481px;width:99px;padding-left:2px;letter-spacing:0.151px;">6.03.2024</div>
<div class="c" style="left:449px;top:481px;width:72px;padding-left:2px;letter-spacing:-0.275px;">Deniz Plastik</div>
<div class="c r" style="left:1301px;top:481px;width:99px;padding-right:4px;">683,33</div>
<div class="c" style="left:1401px;top:481px;width:99px;padding-left:2px;letter-spacing:0.059px;">391.20</div>
<div class="c r" style="left:1601px;top:481px;width:99px;padding-right:4px;">0,00</div>
<div class="c" style="left:1701px;top:481px;width:99px;padding-left:2px;letter-spacing:0.059px;">600.18</div>
<div class="c r" style="left:1801px;top:481px;width:99px;padding-right:4px;">0,00</div>
<div class="c" style="left:1901px;top:481px;width:14px;padding-left:2px">39</div>
<div class="c" style="left:14px;top:503px;width:29px;text-align:center;font-size:12px;letter-spacing:-1px;padding-left:1px">12</div>
<div class="c" style="left:46px;top:503px;width:99px;padding-left:2px;letter-spacing:-0.092px;">E-Arşiv Fatura</div>
<div class="c" style="left:146px;top:503px;width:99px;padding-left:2px;letter-spacing:-0.353px;">Satış</div>
<div class="c" style="left:246px;top:503px;width:102px;padding-left:2px;letter-spacing:0.068px;">EA12024001115...</div>
<div class="c" style="left:349px;top:503px;width:99px;padding-left:2px;letter-spacing:0.151px;">6.03.2024</div>
<div class="c" style="left:449px;top:503px;width:72px;padding-left:2px;letter-spacing:-0.221px;">Kırlangıç Ki...</div>
<div class="c" style="left:522px;top:503px;width:78px;padding-left:4px;letter-spacing:-0.074px;">100.01</div>
<div class="c r" style="left:1301px;top:503px;width:99px;padding-right:4px;">62,63</div>
<div class="c" style="left:1401px;top:503px;width:99px;padding-left:2px;letter-spacing:0.059px;">391.20</div>
<div class="c r" style="left:1601px;top:503px;width:99px;padding-right:4px;">0,00</div>
<div class="c" style="left:1701px;top:503px;width:99px;padding-left:2px;letter-spacing:0.059px;">600.18</div>
<div class="c r" style="left:1801px;top:503px;width:99px;padding-right:4px;">0,00</div>
<div class="c" style="left:1901px;top:503px;width:14px;padding-left:2px">39</div>
<div class="c" style="left:14px;top:525px;width:29px;text-align:center;font-size:12px;letter-spacing:-1px;padding-left:1px">13</div>
<div class="c" style="left:46px;top:525px;width:99px;padding-left:2px;letter-spacing:-0.062px;">E-Fatura</div>
<div class="c" style="left:146px;top:525px;width:99px;padding-left:2px;letter-spacing:-0.353px;">Satış</div>
<div class="c" style="left:246px;top:525px;width:102px;padding-left:2px;letter-spacing:0.069px;">EF12024001115...</div>
<div class="c" style="left:349px;top:525px;width:99px;padding-left:2px;letter-spacing:0.151px;">6.03.2024</div>
<div class="c" style="left:449px;top:525px;width:72px;padding-left:2px;letter-spacing:0.125px;">Durgun İnş...</div>
<div class="c" style="left:522px;top:525px;width:78px;padding-left:4px;letter-spacing:-0.074px;">100.01</div>
<div class="c r" style="left:1301px;top:525px;width:99px;padding-right:4px;">180,33</div>
<div class="c" style="left:1401px;top:525px;width:99px;padding-left:2px;letter-spacing:0.059px;">391.20</div>
<div class="c r" style="left:1601px;top:525px;width:99px;padding-right:4px;">0,00</div>
<div class="c" style="left:1701px;top:525px;width:99px;padding-left:2px;letter-spacing:0.059px;">600.18</div>
<div class="c r" style="left:1801px;top:525px;width:99px;padding-right:4px;">0,00</div>
<div class="c" style="left:1901px;top:525px;width:14px;padding-left:2px">39</div>
<div class="c" style="left:14px;top:547px;width:29px;text-align:center;font-size:12px;letter-spacing:-1px;padding-left:1px">14</div>
<div class="c" style="left:46px;top:547px;width:99px;padding-left:2px;letter-spacing:-0.062px;">E-Fatura</div>
<div class="c" style="left:146px;top:547px;width:99px;padding-left:2px;letter-spacing:-0.353px;">Satış</div>
<div class="c" style="left:246px;top:547px;width:102px;padding-left:2px;letter-spacing:0.069px;">EF12024001115...</div>
<div class="c" style="left:349px;top:547px;width:99px;padding-left:2px;letter-spacing:0.151px;">7.03.2024</div>
<div class="c" style="left:449px;top:547px;width:72px;padding-left:2px;letter-spacing:0.053px;">Kaptan Ma...</div>
<div class="c" style="left:522px;top:547px;width:78px;padding-left:4px;letter-spacing:-0.074px;">102.01</div>
<div class="c r" style="left:1301px;top:547px;width:99px;padding-right:4px;">10.295,73</div>
<div class="c" style="left:1401px;top:547px;width:99px;padding-left:2px;letter-spacing:0.059px;">391.20</div>
<div class="c r" style="left:1601px;top:547px;width:99px;padding-right:4px;">0,00</div>
<div class="c" style="left:1701px;top:547px;width:99px;padding-left:2px;letter-spacing:0.059px;">600.18</div>
<div class="c r" style="left:1801px;top:547px;width:99px;padding-right:4px;">0,00</div>
<div class="c" style="left:1901px;top:547px;width:14px;padding-left:2px">39</div>
<div class="c" style="left:14px;top:569px;width:29px;text-align:center;font-size:12px;letter-spacing:-1px;padding-left:1px">15</div>
<svg style="left:13px;top:577px" width="6" height="6" viewBox="0 0 6 6"><g stroke="#444" stroke-width="1.5"><path d="M3 0v6M0.3 1.5l5.4 3M5.7 1.5l-5.4 3"/></g><circle cx="3" cy="3" r="1.8" fill="#444"/></svg>
<svg style="left:11px;top:267px" width="6" height="10" viewBox="0 0 6 10"><path d="M0.5 0.5v9l5-4.5z" fill="#333"/></svg>
<div style="left:520px;top:183px;width:81px;height:388px;border:3px solid #c2075f"></div>
<div style="left:5px;top:951px;width:1910px;height:17px;background:#f0f0f0;border-top:1px solid #fff;border-bottom:1px solid #fff"></div>
<div style="left:22px;top:952px;width:722px;height:15px;background:#cdcdcd"></div>
<svg style="left:9px;top:955px" width="7" height="9" viewBox="0 0 7 9"><path d="M5.5 0.8l-4 3.7 4 3.7" fill="none" stroke="#555" stroke-width="1.7"/></svg>
<svg style="left:1903px;top:955px" width="7" height="9" viewBox="0 0 7 9"><path d="M1.5 0.8l4 3.7-4 3.7" fill="none" stroke="#555" stroke-width="1.7"/></svg>
<div style="left:2px;top:991px;width:1499px;height:1px;background:#d0d0d0"></div>
<div style="left:2px;top:992px;width:1499px;height:1px;background:#fafafa"></div>
<div style="left:2px;top:994px;width:90px;height:18px;border:1px solid;border-color:#a0a0a0 #fff #fff #a0a0a0;"></div>
<div class="t" style="left:7.5px;top:994.5px;height:18px;line-height:18px;font-size:12px;letter-spacing:-0.534px;">Fatura Sayısı:14</div>
<div style="left:93px;top:994px;width:72px;height:19px;background:#008000"></div>
<div style="left:93px;top:994px;width:71px;height:18px;background:#fff"></div>
<div style="left:94px;top:995px;width:69px;height:16px;background:#008000"></div>
<div style="left:93px;top:994px;width:1px;height:18px;background:#f0f0f0"></div>
<div style="left:93px;top:994px;width:71px;height:1px;background:#a0a0a0"></div>
<div class="t" style="left:101.3px;top:994.5px;height:18px;line-height:18px;font-size:12px;letter-spacing:-0.455px;color:#fff">Bakiye:0,00</div>
<div style="left:165px;top:994px;width:163px;height:18px;border:1px solid;border-color:#a0a0a0 #fff #fff #a0a0a0;"></div>
<div class="t" style="left:173.3px;top:994.5px;height:18px;line-height:18px;font-size:12px;letter-spacing:-0.278px;">Kdv Hariç Toplam:125.130,80</div>
<div style="left:329px;top:994px;width:126px;height:18px;border:1px solid;border-color:#a0a0a0 #fff #fff #a0a0a0;"></div>
<div class="t" style="left:337.5px;top:994.5px;height:18px;line-height:18px;font-size:12px;letter-spacing:-0.346px;">Toplam Kdv:24.780,82</div>
<div style="left:456px;top:994px;width:106px;height:18px;border:1px solid;border-color:#a0a0a0 #fff #fff #a0a0a0;"></div>
<div class="t" style="left:463.8px;top:994.5px;height:18px;line-height:18px;font-size:12px;letter-spacing:-0.273px;">Diğer Vergiler:0,00</div>
<div style="left:564px;top:994px;width:142px;height:18px;border:1px solid;border-color:#a0a0a0 #fff #fff #a0a0a0;"></div>
<div class="t" style="left:572px;top:994.5px;height:18px;line-height:18px;font-size:12px;letter-spacing:-0.319px;">Genel Toplam:149.911,62</div>
<div style="left:708px;top:995px;width:1px;height:16px;background:#a0a0a0"></div>
<div style="left:711px;top:995px;width:1px;height:16px;background:#a0a0a0"></div>
<div style="left:2px;top:1019px;width:46px;height:18px;border:1px solid;border-color:#a0a0a0 #fff #fff #a0a0a0;"></div>
<div class="t" style="left:6.5px;top:1019.5px;height:18px;line-height:18px;font-size:12px;letter-spacing:-1.335px;">DEBUG</div>
<div style="left:49px;top:1019px;width:96px;height:18px;border:1px solid;border-color:#a0a0a0 #fff #fff #a0a0a0;"></div>
<div class="t" style="left:54px;top:1019.5px;height:18px;line-height:18px;font-size:12px;letter-spacing:-0.390px;">Versiyon : 5.1.0.0</div>
<div class="btn" style="left:1664px;top:985px;width:128px;height:21px;"></div>
<div style="left:1667px;top:988px;width:122px;height:15px;background:#008000"></div>
<div class="t" style="left:1671px;top:988px;height:15px;line-height:15px;font-size:13px;letter-spacing:-0.297px;color:#fff;font-weight:bold">DIŞARI AKTAR - F2</div>
<div class="btn" style="left:1800px;top:985px;width:115px;height:21px;"></div>
<div style="left:1803px;top:988px;width:109px;height:15px;background:#cd5c5c"></div>
<div class="t" style="left:1814px;top:988px;height:15px;line-height:15px;font-size:13px;letter-spacing:-0.508px;color:#fff;font-weight:bold">VAZGEÇ - ESC</div>
<div style="left:650px;top:465px;width:618px;height:148px;background:#f0f0f0;border:3px solid #c2075f;box-shadow:0 4px 16px rgba(0,0,0,0.30)"></div>
<div style="left:653px;top:468px;width:612px;height:30px;background:#fff"></div>
<div style="left:660.7px;top:473.8px;width:16px;height:16px;border-radius:50%;background:#c2136b;color:#fff;font-weight:bold;font-size:9px;line-height:16px;text-align:center">F</div>
<div class="t" style="left:682.3px;top:474px;height:19px;line-height:19px;font-size:12px;letter-spacing:-0.396px;">Hesap Planı Seçin</div>
<svg style="left:1140px;top:470px" width="120" height="24" viewBox="0 0 120 24"><g stroke="#000" stroke-width="1" fill="none"><path d="M7 12.5h10"/><path d="M52.5 7.5h9v9h-9z"/><path d="M98 7l10 10M108 7l-10 10"/></g></svg>
<div style="left:663px;top:528px;width:497px;height:24px;border:3px solid #c2075f;background:#fff"></div>
<div style="left:667px;top:532px;width:489px;height:16px;background:#ffd700"></div>
<div style="left:1163px;top:526px;width:89px;height:27px;border:3px solid #c2075f;background:#f0f0f0"></div>
<div style="left:1166px;top:529px;width:83px;height:21px;background:#e6ebe3"></div>
<div style="left:1168px;top:531px;width:79px;height:17px;background:#0000ff"></div>
<div class="t" style="left:1188px;top:530.7px;height:17px;line-height:17px;font-size:11px;letter-spacing:-0.227px;color:#fff">Gözat...</div>
<div class="btn" style="left:1016px;top:581px;width:123px;height:21px;"></div>
<div style="left:1019px;top:584px;width:117px;height:15px;background:#008000"></div>
<div class="t" style="left:1045px;top:584.5px;height:15px;line-height:15px;font-size:12px;letter-spacing:-0.080px;color:#fff;font-weight:bold">Tamam - F2</div>
<div class="btn" style="left:1147px;top:581px;width:115px;height:21px;"></div>
<div style="left:1150px;top:584px;width:109px;height:15px;background:#cd5c5c"></div>
<div class="t" style="left:1166px;top:584.5px;height:15px;line-height:15px;font-size:12px;letter-spacing:0.191px;color:#fff;font-weight:bold">Vazgeç - Esc</div>
</body></html>
